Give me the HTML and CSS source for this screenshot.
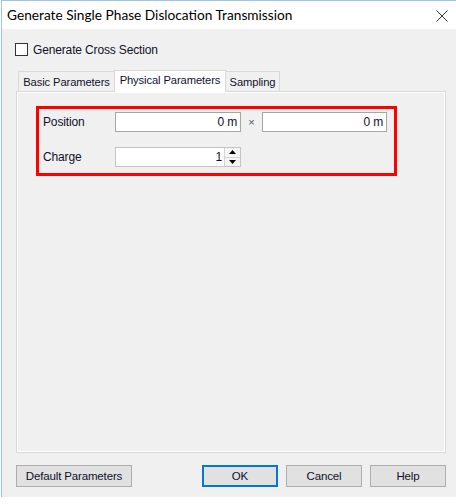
FILE: index.html
```html
<!DOCTYPE html>
<html>
<head>
<meta charset="utf-8">
<link rel="stylesheet" href="styles.css">
</head>
<body>
<div class="window">
  <div class="titlebar">
    <span class="title">Generate Single Phase Dislocation Transmission</span>
    <svg class="close" width="12" height="12" viewBox="0 0 12 12"><path d="M0.5 0.5 L11.5 11.5 M11.5 0.5 L0.5 11.5" stroke="#333" stroke-width="1" fill="none"/></svg>
  </div>
  <div class="body">
    <div class="check"><span class="box"></span><span>Generate Cross Section</span></div>
    <div class="tabs">
      <div class="tab t1">Basic Parameters</div>
      <div class="tab active t2">Physical Parameters</div>
      <div class="tab t3">Sampling</div>
    </div>
    <div class="panel">
      <div class="group">
        <div class="row">
          <span class="lbl">Position</span>
          <div class="input w1">0 m</div>
          <span class="times">×</span>
          <div class="input w2">0 m</div>
        </div>
        <div class="row row2">
          <span class="lbl">Charge</span>
          <div class="input spin w1">
            <span class="val">1</span>
            <div class="spinbtns">
              <div class="sb"><svg width="7" height="4" viewBox="0 0 7 4"><path d="M3.5 0 L7 4 L0 4 Z" fill="#000"/></svg></div>
              <div class="sb"><svg width="7" height="4" viewBox="0 0 7 4"><path d="M0 0 L7 0 L3.5 4 Z" fill="#000"/></svg></div>
            </div>
          </div>
        </div>
      </div>
    </div>
    <div class="buttons">
      <div class="btn bdef">Default Parameters</div>
      <div class="spacer"></div>
      <div class="btn ok">OK</div>
      <div class="btn">Cancel</div>
      <div class="btn">Help</div>
    </div>
  </div>
</div>
</body>
</html>
```
FILE: styles.css
```css
html, body { margin: 0; padding: 0; background: #fff; }
body { padding-left: 1px; width: 455px; height: 504px; overflow: hidden; }
.window {
  width: 454px;
  height: 496px;
  border-top: 1px solid #9ec4ea;
  border-left: 1px solid #9ec4ea;
  background: #f0f0f0;
  font-family: "Liberation Sans", Arial, sans-serif;
  font-size: 12px;
  letter-spacing: -0.15px;
  color: #10102a;
}
.titlebar {
  height: 28px;
  background: #fff;
  display: flex;
  align-items: center;
  justify-content: space-between;
  padding-left: 5px;
  padding-right: 8px;
}
.title {
  font-family: Lato, "Liberation Sans", sans-serif;
  font-size: 13.7px;
  letter-spacing: 0;
  color: #000;
  padding-bottom: 1px;
}
.close { display: block; margin-top: 2px; }
.body { padding: 14px 10px 0 14px; }
.check { display: flex; align-items: center; height: 13px; margin-left: -1px; }
.box {
  width: 11px; height: 11px;
  border: 1px solid #333;
  background: #fff;
  margin-right: 5px;
}
.tabs {
  display: flex;
  align-items: flex-end;
  height: 21px;
  margin-top: 14px;
  padding-left: 2px;
  position: relative;
  z-index: 1;
  font-size: 11.2px;
  letter-spacing: -0.1px;
}
.tab {
  height: 18px;
  border: 1px solid #d9d9d9;
  border-bottom: none;
  background: #f0f0f0;
  display: flex;
  align-items: center;
  justify-content: center;
  box-sizing: content-box;
  padding-top: 1px;
}
.t1 { width: 95px; border-right: none; }
.t3 { width: 53px; border-left: none; }
.tab.active {
  width: 112px;
  background: #fff;
  margin-bottom: -1px;
  align-items: flex-start;
  padding-top: 3px;
  box-sizing: border-box;
  height: 22px;
}
.panel {
  width: 430px;
  height: 362px;
  box-sizing: border-box;
  border: 1px solid #d9d9d9;
  box-shadow: inset 0 0 0 1px #fff;
  padding: 14px 0 0 19px;
}
.group {
  width: 361px;
  height: 70px;
  box-sizing: border-box;
  border: 3px solid #f00;
  padding: 3px 0 0 4px;
}
.row { display: flex; align-items: center; height: 20px; }
.row2 { margin-top: 15px; }
.lbl { width: 72px; }
.input {
  height: 20px;
  box-sizing: border-box;
  border: 1px solid #a6a6a6;
  background: #fff;
  display: flex;
  align-items: center;
  justify-content: flex-end;
  padding-right: 3px;
}
.w1 { width: 126px; }
.w2 { width: 125px; }
.times { width: 21px; text-align: center; color: #55556a; font-size: 11px; }
.spin { border-color: #c4c4c4; padding-right: 0; }
.val { margin-right: 2px; }
.spinbtns {
  width: 16px;
  height: 18px;
  display: flex;
  flex-direction: column;
  border-left: 1px solid #d4d4d4;
  box-sizing: border-box;
}
.sb {
  flex: 1;
  display: flex;
  align-items: center;
  justify-content: center;
  background: #f5f5f5;
}
.sb + .sb { border-top: 1px solid #d4d4d4; }
.buttons { display: flex; margin-top: 12px; width: 430px; gap: 8px; font-size: 11.5px; }
.spacer { flex: 1; }
.btn {
  width: 76px;
  height: 22px;
  box-sizing: border-box;
  border: 1px solid #adadad;
  background: #e1e1e1;
  display: flex;
  align-items: center;
  justify-content: center;
}
.bdef { width: 116px; }
.ok { border-color: #0078d7; box-shadow: inset 0 0 0 1px #0078d7; }
```
